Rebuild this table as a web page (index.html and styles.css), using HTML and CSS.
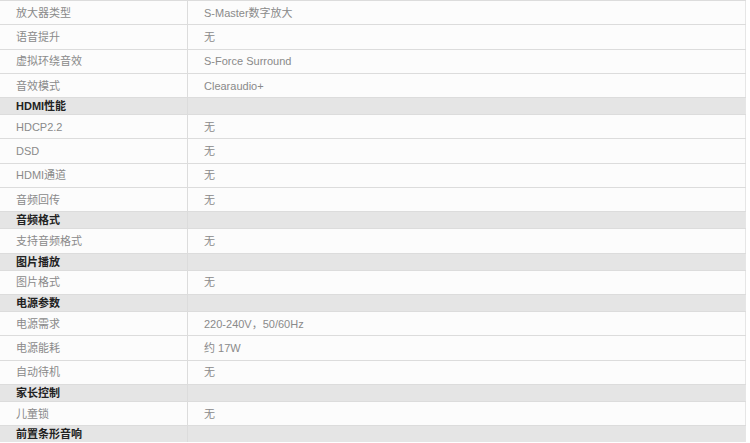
FILE: index.html
```html
<!DOCTYPE html>
<html lang="zh">
<head>
<meta charset="utf-8">
<link rel="stylesheet" href="styles.css">
</head>
<body>
<table class="spec">
<tbody>
<tr class="row"><td class="k">放大器类型</td><td class="v">S-Master数字放大</td></tr>
<tr class="row"><td class="k">语音提升</td><td class="v">无</td></tr>
<tr class="row"><td class="k">虚拟环绕音效</td><td class="v">S-Force Surround</td></tr>
<tr class="row"><td class="k">音效模式</td><td class="v">Clearaudio+</td></tr>
<tr class="head"><td class="k">HDMI性能</td><td class="v"></td></tr>
<tr class="row"><td class="k">HDCP2.2</td><td class="v">无</td></tr>
<tr class="row"><td class="k">DSD</td><td class="v">无</td></tr>
<tr class="row"><td class="k">HDMI通道</td><td class="v">无</td></tr>
<tr class="row"><td class="k">音频回传</td><td class="v">无</td></tr>
<tr class="head"><td class="k">音频格式</td><td class="v"></td></tr>
<tr class="row"><td class="k">支持音频格式</td><td class="v">无</td></tr>
<tr class="head"><td class="k">图片播放</td><td class="v"></td></tr>
<tr class="row"><td class="k">图片格式</td><td class="v">无</td></tr>
<tr class="head"><td class="k">电源参数</td><td class="v"></td></tr>
<tr class="row"><td class="k">电源需求</td><td class="v">220-240V，50/60Hz</td></tr>
<tr class="row"><td class="k">电源能耗</td><td class="v">约 17W</td></tr>
<tr class="row"><td class="k">自动待机</td><td class="v">无</td></tr>
<tr class="head"><td class="k">家长控制</td><td class="v"></td></tr>
<tr class="row"><td class="k">儿童锁</td><td class="v">无</td></tr>
<tr class="head"><td class="k">前置条形音响</td><td class="v"></td></tr>
</tbody>
</table>
</body>
</html>
```
FILE: styles.css
```css
html, body {
  margin: 0;
  padding: 0;
  background: #ffffff;
}
body {
  font-family: "Liberation Sans", "Noto Sans CJK SC", sans-serif;
  font-size: 11px;
  line-height: 14px;
  color: #8a8a8a;
  overflow: hidden;
}
.spec {
  width: 746px;
  border-collapse: collapse;
  table-layout: fixed;
  border-right: 1px solid #e6e6e6;
}
.spec td {
  padding: 0 0 0 16px;
  border-top: 1px solid #dcdcdc;
  vertical-align: middle;
  white-space: nowrap;
}
.spec td.k {
  width: 171px;
  border-right: 1px solid #dcdcdc;
}
.row td {
  height: 23.3px;
  background: #fcfcfc;
}
.head td {
  height: 16px;
  background: #e5e5e5;
  color: #222;
  font-weight: bold;
}
```
